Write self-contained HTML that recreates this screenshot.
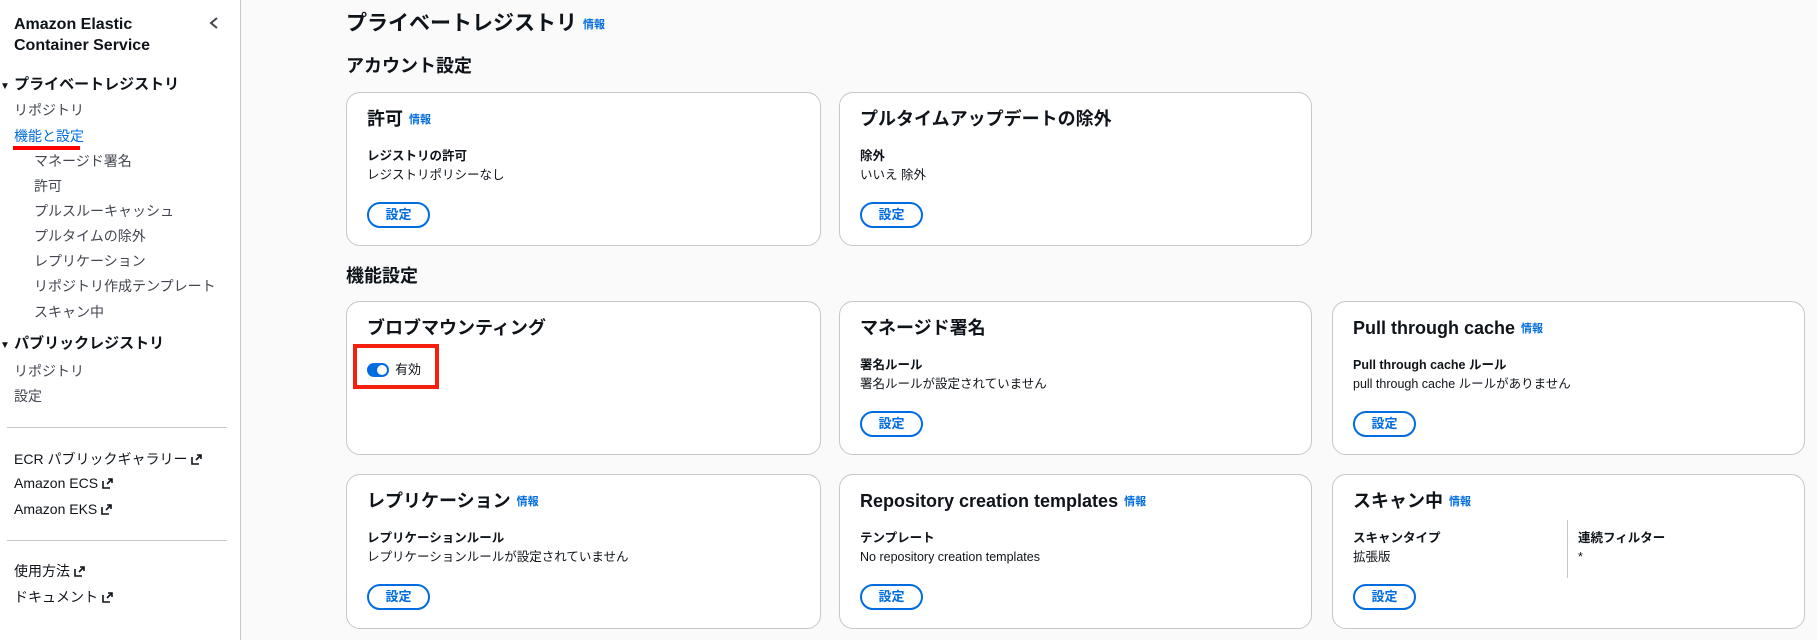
<!DOCTYPE html>
<html><head><meta charset="utf-8"><style>
*{margin:0;padding:0;box-sizing:border-box}
body{width:1817px;height:640px;overflow:hidden;background:#fafafa;font-family:"Liberation Sans","Noto Sans CJK JP",sans-serif;color:#0f141a;position:relative}
.a{position:absolute;white-space:nowrap}
#side{position:absolute;left:0;top:0;width:241px;height:640px;background:#fff;border-right:1px solid #c6c6cd}
.s{font-size:14px;color:#424650;line-height:18px}
.h{font-size:15px;font-weight:bold;line-height:18px;color:#0f141a}
.hr{position:absolute;left:7px;width:220px;height:1px;background:#c6c6cd}
.ext{display:inline-block;width:11px;height:11px;margin-left:4px;vertical-align:-1px}
.card{position:absolute;background:#fff;border:1px solid #c6c6cd;border-radius:14px}
.card .t{position:absolute;left:20px;top:14px;font-size:18px;line-height:24px;font-weight:bold;white-space:nowrap}
.info{font-size:11px;color:#006ce0;font-weight:bold;margin-left:6px;vertical-align:2px}
.card .l{position:absolute;left:20px;top:55px;font-size:12.5px;line-height:16px;font-weight:bold;white-space:nowrap}
.card .v{position:absolute;left:20px;top:74px;font-size:12.5px;line-height:16px;white-space:nowrap}
.btn{position:absolute;left:20px;top:109px;width:63px;height:26px;border:2px solid #006ce0;border-radius:14px;color:#006ce0;font-size:13px;font-weight:bold;text-align:center;line-height:22px}
</style></head><body>
<div id="side">
<div class="a" style="left:14px;top:14px;font-size:16px;font-weight:bold;line-height:21px">Amazon Elastic<br>Container Service</div>
<svg class="a" style="left:208px;top:16px" width="12" height="14"><path d="M9 2L3 7l6 5" fill="none" stroke="#424650" stroke-width="2"/></svg>
<div class="a h" style="left:0;top:76px"><span style="font-size:10px">▼</span> プライベートレジストリ</div>
<div class="a s" style="left:14px;top:101px">リポジトリ</div>
<div class="a s" style="left:14px;top:127px;color:#006ce0">機能と設定</div>
<div class="a" style="left:13px;top:146px;width:67px;height:4px;background:#f00"></div>
<div class="a s" style="left:34px;top:152px">マネージド署名</div>
<div class="a s" style="left:34px;top:177px">許可</div>
<div class="a s" style="left:34px;top:202px">プルスルーキャッシュ</div>
<div class="a s" style="left:34px;top:227px">プルタイムの除外</div>
<div class="a s" style="left:34px;top:252px">レプリケーション</div>
<div class="a s" style="left:34px;top:277px">リポジトリ作成テンプレート</div>
<div class="a s" style="left:34px;top:303px">スキャン中</div>
<div class="a h" style="left:0;top:335px"><span style="font-size:10px">▼</span> パブリックレジストリ</div>
<div class="a s" style="left:14px;top:362px">リポジトリ</div>
<div class="a s" style="left:14px;top:387px">設定</div>
<div class="hr" style="top:427px"></div>
<div class="a s" style="left:14px;top:450px;color:#0f141a">ECR パブリックギャラリー<svg class="ext" viewBox="0 0 11 11"><path d="M1 3v7h7M5 6l5-5M6 1h4v4" fill="none" stroke="#0f141a" stroke-width="1.6"/></svg></div>
<div class="a s" style="left:14px;top:474px;color:#0f141a">Amazon ECS<svg class="ext" viewBox="0 0 11 11"><path d="M1 3v7h7M5 6l5-5M6 1h4v4" fill="none" stroke="#0f141a" stroke-width="1.6"/></svg></div>
<div class="a s" style="left:14px;top:500px;color:#0f141a">Amazon EKS<svg class="ext" viewBox="0 0 11 11"><path d="M1 3v7h7M5 6l5-5M6 1h4v4" fill="none" stroke="#0f141a" stroke-width="1.6"/></svg></div>
<div class="hr" style="top:540px"></div>
<div class="a s" style="left:14px;top:562px;color:#0f141a">使用方法<svg class="ext" viewBox="0 0 11 11"><path d="M1 3v7h7M5 6l5-5M6 1h4v4" fill="none" stroke="#0f141a" stroke-width="1.6"/></svg></div>
<div class="a s" style="left:14px;top:588px;color:#0f141a">ドキュメント<svg class="ext" viewBox="0 0 11 11"><path d="M1 3v7h7M5 6l5-5M6 1h4v4" fill="none" stroke="#0f141a" stroke-width="1.6"/></svg></div>
</div>

<div class="a" style="left:346px;top:10px;font-size:21px;line-height:28px;font-weight:bold">プライベートレジストリ<span class="info">情報</span></div>
<div class="a" style="left:346px;top:54px;font-size:18px;line-height:24px;font-weight:bold">アカウント設定</div>
<div class="a" style="left:346px;top:264px;font-size:18px;line-height:24px;font-weight:bold">機能設定</div>

<div class="card" style="left:346px;top:92px;width:475px;height:154px"><div class="t">許可<span class="info">情報</span></div><div class="l">レジストリの許可</div><div class="v">レジストリポリシーなし</div><div class="btn">設定</div></div>
<div class="card" style="left:839px;top:92px;width:473px;height:154px"><div class="t">プルタイムアップデートの除外</div><div class="l">除外</div><div class="v">いいえ 除外</div><div class="btn">設定</div></div>

<div class="card" style="left:346px;top:301px;width:475px;height:154px"><div class="t">ブロブマウンティング</div>
<div class="a" style="left:6px;top:42px;width:86px;height:45px;border:4px solid #f3200f"></div>
<div class="a" style="left:20px;top:61px;width:22px;height:14px;border-radius:7px;background:#006ce0"><div style="position:absolute;right:2px;top:2px;width:10px;height:10px;border-radius:5px;background:#fff"></div></div>
<div class="a" style="left:48px;top:59px;font-size:13px;line-height:17px">有効</div></div>
<div class="card" style="left:839px;top:301px;width:473px;height:154px"><div class="t">マネージド署名</div><div class="l">署名ルール</div><div class="v">署名ルールが設定されていません</div><div class="btn">設定</div></div>
<div class="card" style="left:1332px;top:301px;width:473px;height:154px"><div class="t">Pull through cache<span class="info">情報</span></div><div class="l">Pull through cache ルール</div><div class="v">pull through cache ルールがありません</div><div class="btn">設定</div></div>

<div class="card" style="left:346px;top:474px;width:475px;height:155px"><div class="t">レプリケーション<span class="info">情報</span></div><div class="l">レプリケーションルール</div><div class="v">レプリケーションルールが設定されていません</div><div class="btn">設定</div></div>
<div class="card" style="left:839px;top:474px;width:473px;height:155px"><div class="t">Repository creation templates<span class="info">情報</span></div><div class="l">テンプレート</div><div class="v">No repository creation templates</div><div class="btn">設定</div></div>
<div class="card" style="left:1332px;top:474px;width:473px;height:155px"><div class="t">スキャン中<span class="info">情報</span></div><div class="l">スキャンタイプ</div><div class="v">拡張版</div>
<div class="a" style="left:234px;top:45px;width:1px;height:58px;background:#c6c6cd"></div>
<div class="a" style="left:245px;top:55px;font-size:12.5px;line-height:16px;font-weight:bold">連続フィルター</div>
<div class="a" style="left:245px;top:74px;font-size:12.5px;line-height:16px">*</div>
<div class="btn">設定</div></div>
</body></html>
